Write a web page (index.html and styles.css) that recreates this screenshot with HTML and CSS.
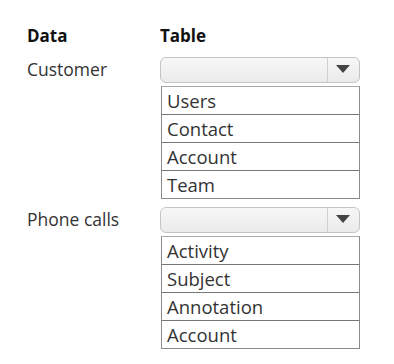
FILE: index.html
```html
<!DOCTYPE html>
<html>
<head>
  <title>Data mapping</title>
  <link rel="stylesheet" href="styles.css">
</head>
<body>
  <div class="mapping">
    <div class="head">
      <span class="col-label">Data</span>
      <span>Table</span>
    </div>

    <div class="row">
      <div class="col-label name">Customer</div>
      <div class="picker">
        <div class="select">
          <span class="value"></span>
          <span class="arrow"></span>
        </div>
        <ul class="options">
          <li>Users</li>
          <li>Contact</li>
          <li>Account</li>
          <li>Team</li>
        </ul>
      </div>
    </div>

    <div class="row">
      <div class="col-label name">Phone calls</div>
      <div class="picker">
        <div class="select">
          <span class="value"></span>
          <span class="arrow"></span>
        </div>
        <ul class="options">
          <li>Activity</li>
          <li>Subject</li>
          <li>Annotation</li>
          <li>Account</li>
        </ul>
      </div>
    </div>
  </div>
</body>
</html>
```

FILE: styles.css
```css
body {
  margin: 0;
  background: #fff;
  font-family: "Open Sans", "Noto Sans", sans-serif;
  color: #333;
}
.mapping {
  padding: 25px 0 0 27px;
}
.head {
  display: flex;
  font-weight: bold;
  font-size: 17px;
  color: #111;
  line-height: 22px;
}
.col-label {
  width: 133px;
  flex-shrink: 0;
}
.row {
  display: flex;
  margin-top: 10px;
}
.row + .row {
  margin-top: 8px;
}
.name {
  font-size: 17.5px;
  line-height: 22px;
  padding-top: 1px;
}
.picker {
  width: 200px;
}
.select {
  display: flex;
  height: 24px;
  border: 1px solid #c4c4c4;
  border-radius: 6px;
  background: linear-gradient(#f7f7f7, #ebebeb);
}
.value {
  flex: 1;
}
.arrow {
  width: 31px;
  border-left: 1px solid #d0d0d0;
  position: relative;
}
.arrow::after {
  content: "";
  position: absolute;
  left: 8px;
  top: 7px;
  border-left: 7px solid transparent;
  border-right: 7px solid transparent;
  border-top: 8px solid #444;
}
.options {
  list-style: none;
  margin: 3px 0 0 1px;
  padding: 0;
  border: 1px solid #8a8a8a;
  border-top-color: #aaa;
}
.options li {
  height: 27px;
  line-height: 27px;
  padding-left: 5px;
  font-size: 18.5px;
  color: #333;
  border-top: 1px solid #777;
}
.options li:first-child {
  border-top: none;
}
```
